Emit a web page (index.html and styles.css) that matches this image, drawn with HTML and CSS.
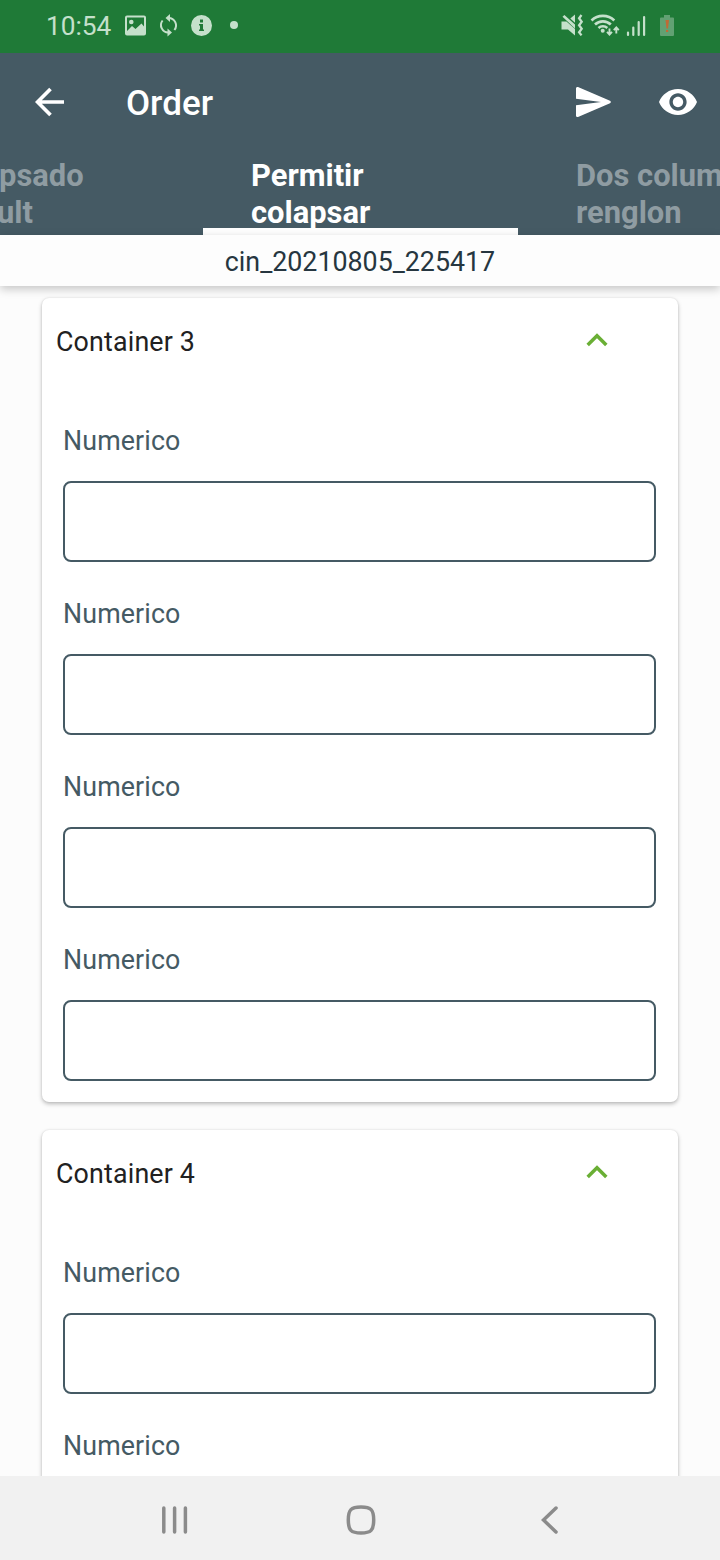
FILE: index.html
```
<!DOCTYPE html>
<html lang="es">
<head>
<meta charset="utf-8">
<title>Order</title>
<link rel="stylesheet" href="styles.css">
</head>
<body>
<div class="screen">
  <header class="status">
    <span class="clock">10:54</span>
    <svg class="status-left" width="118" height="26" viewBox="124 13 118 26">
      <path fill-rule="evenodd" d="M127 15.500h17a2 2 0 0 1 2 2v16a2 2 0 0 1-2 2h-17a2 2 0 0 1-2-2V17.500a2 2 0 0 1 2-2zM127 17.500V31l5-5 3.500 3 6-5.500 2.500 3V17.500z"/>
      <circle cx="131.300" cy="22" r="2.300"/>
      <g fill="none" stroke="currentColor" stroke-width="2"><path d="M168.500 18a7.400 7.400 0 0 1 5.900 12M168.500 32.500a7.400 7.400 0 0 1-5.900-12"/></g>
      <path d="M170 14v8l-4.500-4zM167.500 28.500v8l4.500-4z"/>
      <path fill-rule="evenodd" d="M201.500 15a10.500 10.500 0 1 0 0 21 10.500 10.500 0 0 0 0-21zM200 19.500h3v3h-3zM199 24h4v5.500h1V31h-5v-1.500h1V25.500h-1z"/>
      <circle cx="234" cy="25" r="4"/>
    </svg>
    <svg class="status-right" width="120" height="28" viewBox="558 12 120 28">
      <path d="M561.500 21.500h5l8.500 7.500v6.500l-7-6h-6.500zM562.500 16.800l1.900-1.900L575 24.500V28.500zM570.300 18.600l4.700-4V22.800z"/>
      <g fill="none" stroke="currentColor" stroke-width="2.300">
        <path d="M581.500 15l-2.400 3.200 2.600 3.500-2.600 3.500 2.600 3.500-2.600 3.500 2.400 3.200"/>
        <path d="M591.500 20.500a16.500 16.500 0 0 1 22.800 0" stroke-width="2.700"/>
        <path d="M595 24.500a11.500 11.500 0 0 1 15.800 0" stroke-width="2.700"/>
        <path d="M598.500 28a6.300 6.300 0 0 1 8.800 0" stroke-width="2.500"/>
        <path d="M609.500 28.500v6M607 31.800l2.500 2.700 2.500-2.700M616.300 33.500v-6M613.800 30.200l2.500-2.700 2.500 2.700" stroke-width="1.900"/>
      </g>
      <circle cx="602.700" cy="30.700" r="2"/>
      <g fill="none" stroke="currentColor" stroke-width="2.200" stroke-linecap="round"><path d="M628 32.500V35M633.300 27.500V35M638.700 22v13M644.100 17v18"/></g>
      <path class="battery" d="M664 15h6v2.500h3a1 1 0 0 1 1 1V35a1 1 0 0 1-1 1h-12a1 1 0 0 1-1-1V18.500a1 1 0 0 1 1-1h3z"/>
      <path class="battery-alert" d="M665.500 20h3.500l-1 8.500h-1.500zM666 30h2.200v2H666z"/>
    </svg>
  </header>
  <div class="appbar">
    <svg class="back" width="30" height="30" viewBox="0 0 30 30"><path d="M29 15H3M15.500 2L2.500 15l13 13" fill="none" stroke="currentColor" stroke-width="3.700"/></svg>
    <h1 class="title">Order</h1>
    <svg class="send" width="35" height="30" viewBox="0 0 35 30"><path d="M2 .1L34 13.800a1.300 1.300 0 0 1 0 2.400L2 29.900a1.400 1.400 0 0 1-2-1.300V18.300L25 15 0 11.700V1.400A1.400 1.400 0 0 1 2 .1z"/></svg>
    <svg class="eye" width="38" height="26" viewBox="1 4.500 22 15"><path d="M12 4.500C7 4.500 2.730 7.610 1 12c1.730 4.390 6 7.500 11 7.500s9.270-3.110 11-7.500c-1.730-4.390-6-7.500-11-7.500zM12 17c-2.760 0-5-2.240-5-5s2.240-5 5-5 5 2.240 5 5-2.240 5-5 5zm0-8c-1.660 0-3 1.340-3 3s1.340 3 3 3 3-1.340 3-3-1.340-3-3-3z"/></svg>
  </div>
  <nav class="tabs">
    <div class="tab tab-prev"><span>psado</span><span class="tail">ult</span></div>
    <div class="tab tab-active"><span>Permitir</span><span>colapsar</span></div>
    <div class="tab tab-next"><span>Dos colum</span><span>renglon</span></div>
  </nav>
  <div class="subheader">cin_20210805_225417</div>
  <main class="content">
    <section class="card">
      <div class="card-head"><h2>Container 3</h2><svg class="chevron" width="22" height="14" viewBox="0 0 22 14"><path d="M1.700 12L11 2.700 20.300 12"/></svg></div>
      <label class="field">Numerico<input class="box" type="text"></label>
      <label class="field">Numerico<input class="box" type="text"></label>
      <label class="field">Numerico<input class="box" type="text"></label>
      <label class="field">Numerico<input class="box" type="text"></label>
    </section>
    <section class="card">
      <div class="card-head"><h2>Container 4</h2><svg class="chevron" width="22" height="14" viewBox="0 0 22 14"><path d="M1.700 12L11 2.700 20.300 12"/></svg></div>
      <label class="field">Numerico<input class="box" type="text"></label>
      <label class="field">Numerico</label>
    </section>
  </main>
  <footer class="navbar">
    <svg class="recents" width="26" height="28" viewBox="0 0 26 28"><path d="M1.800 2v24M12.600 2v24M23.400 2v24"/></svg>
    <svg class="home" width="30" height="30" viewBox="0 0 30 30"><path d="M15 2C25 2 27.700 4.700 27.700 15S25 28 15 28 2.300 25.300 2.300 15 5 2 15 2z"/></svg>
    <svg class="nav-back" width="17" height="28" viewBox="0 0 17 28"><path d="M15 2L2.500 14 15 26"/></svg>
  </footer>
</div>
</body>
</html>
```

FILE: styles.css
```
* { box-sizing: border-box; }
body { margin: 0; font-family: Roboto, sans-serif; font-size: 26.8px; }
h1, h2 { margin: 0; }
svg { display: block; flex: none; fill: currentColor; }

.screen {
  width: 720px;
  height: 1560px;
  overflow: hidden;
  display: flex;
  flex-direction: column;
  background: #fcfcfc;
}

.status {
  flex: none;
  height: 53px;
  display: flex;
  align-items: flex-start;
  padding: 12px 42px 0 46px;
  background: #1f7a37;
  color: #c5e0cb;
}
.clock { width: 78px; font-size: 26.25px; line-height: 28px; white-space: nowrap; }
.status-left { margin-top: 1px; }
.status-right { margin-left: auto; }
.battery { fill: #62a173; }
.battery-alert { fill: #c06a35; }

.appbar {
  flex: none;
  height: 99px;
  display: flex;
  align-items: center;
  padding: 0 23px 2px 35px;
  background: #455a64;
  color: #fff;
}
.title {
  margin-left: 61px;
  font-size: 35px;
  font-weight: 500;
  line-height: 40px;
  padding-top: 4px;
}
.send { margin-left: auto; }
.eye { margin-left: 48px; }

.tabs {
  flex: none;
  height: 83px;
  display: flex;
  overflow: hidden;
  background: #455a64;
  color: #8f9ca2;
  font-size: 30.9px;
  font-weight: 700;
  line-height: 37px;
}
.tab { flex: none; display: flex; flex-direction: column; padding-top: 5px; white-space: nowrap; }
.tab-prev { width: 203px; text-indent: -1px; }
.tail { text-indent: -3px; }
.tab-active {
  width: 315px;
  padding-left: 48px;
  color: #fff;
  background: linear-gradient(#fff, #fff) bottom / 100% 7px no-repeat;
}
.tab-next { width: 202px; padding-left: 58px; }

.subheader {
  position: relative;
  flex: none;
  height: 51px;
  padding-top: 3px;
  line-height: 48px;
  text-align: center;
  color: #263640;
  background: #fdfdfd;
  box-shadow: 0 3px 9px rgba(0, 0, 0, .22);
}

.content {
  flex: 1;
  min-height: 0;
  overflow: hidden;
  display: flex;
  flex-direction: column;
  gap: 28px;
  padding: 12px 42px 0;
}
.card {
  flex: none;
  padding: 0 22px 21px 21px;
  border-radius: 7px;
  background: #fff;
  box-shadow: 0 2px 4px rgba(0, 0, 0, .26), 0 0 2px rgba(0, 0, 0, .1);
}
.card-head {
  height: 91px;
  display: flex;
  justify-content: space-between;
  margin-left: -7px;
  padding-right: 48px;
}
.card-head h2 { font-size: inherit; font-weight: 400; line-height: 88px; letter-spacing: .17px; color: #212121; }
.chevron { margin-top: 35px; fill: none; stroke: #6aaf35; stroke-width: 3.5; }
.field { display: block; padding-top: 37px; line-height: 30px; letter-spacing: .12px; color: #455a64; }
.box {
  display: block;
  width: 100%;
  height: 81px;
  margin: 25px 0 0;
  border: 2px solid #455a64;
  border-radius: 8px;
  background: #fff;
  outline: 0;
}

.navbar {
  flex: none;
  height: 84px;
  display: flex;
  align-items: center;
  padding: 3px 162px 0 162px;
  justify-content: space-between;
  background: #f1f1f1;
  color: #8b8b8b;
}
.navbar svg { fill: none; stroke: currentColor; stroke-width: 3.5; stroke-linecap: round; }
.home { margin-right: 7px; }
```
